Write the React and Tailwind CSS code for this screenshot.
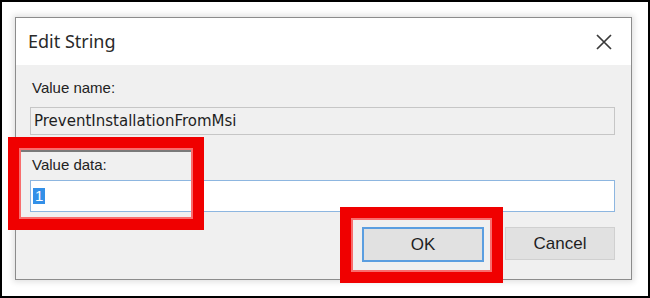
export default function App() {
  const font = { fontFamily: '"Liberation Sans", Arial, sans-serif' };

  return (
    <div
      className="relative w-[650px] h-[298px] overflow-hidden border-2 border-black bg-white pl-[13px] pt-[15px]"
      style={font}
    >
      {/* dialog window */}
      <div className="flex h-[263px] w-[617px] flex-col border border-[#8c8c8c] bg-[#f0f0f0] shadow-[0_0_6px_2px_rgba(0,0,0,0.12)]">
        <div className="flex h-[47px] items-center justify-between bg-white pl-[12px] pr-[19px]">
          <span className="text-[18px] text-[#2a2a2a]" style={{ fontFamily: '"Noto Sans", sans-serif' }}>
            Edit String
          </span>
          <svg width="16" height="16" viewBox="0 0 16 16" className="text-[#3a3a3a]">
            <path d="M1 1 L15 15 M15 1 L1 15" stroke="currentColor" strokeWidth="1.7" fill="none" />
          </svg>
        </div>

        <div className="flex flex-col px-[14px] pr-[16px] pt-[13px]">
          <span className="pl-[2px] text-[15px] leading-[20px] text-[#222]">Value name:</span>
          <div
            className="mt-[9px] flex h-[28px] items-center border border-[#c6c6c6] bg-[#f0f0f0] pl-[3px] text-[15px] text-[#1e1e1e]"
            style={{ fontFamily: '"DejaVu Sans", sans-serif' }}
          >
            PreventInstallationFromMsi
          </div>

          <span className="mt-[20px] pl-[2px] text-[15px] leading-[20px] text-[#222]">Value data:</span>
          <div className="mt-[5px] flex h-[32px] items-center border border-[#8db6e0] bg-white pl-[2px] text-[15px]">
            <span className="bg-[#3390e8] px-[2px] leading-[16px] text-white">1</span>
          </div>

          <div className="mt-[15px] flex justify-end gap-[21px]">
            <button className="h-[35px] w-[122px] border-2 border-[#5b9ee0] bg-[#e1e1e1] text-[17px] text-[#1e1e1e]">
              OK
            </button>
            <button className="h-[33px] w-[110px] border border-[#d0d0d0] bg-[#e1e1e1] text-[17px] text-[#1e1e1e]">
              Cancel
            </button>
          </div>
        </div>
      </div>

      {/* red annotation boxes */}
      <div className="absolute left-[6px] top-[135px] h-[93px] w-[196px] border-[11px] border-[#f00000] shadow-[inset_0_0_0_2px_#f86d6d,inset_0_3px_0_1px_#7a7a7a]" />
      <div className="absolute left-[338px] top-[205px] h-[76px] w-[163px] border-[11px] border-[#f00000] shadow-[inset_0_0_0_2px_#f86d6d]" />
    </div>
  );
}
